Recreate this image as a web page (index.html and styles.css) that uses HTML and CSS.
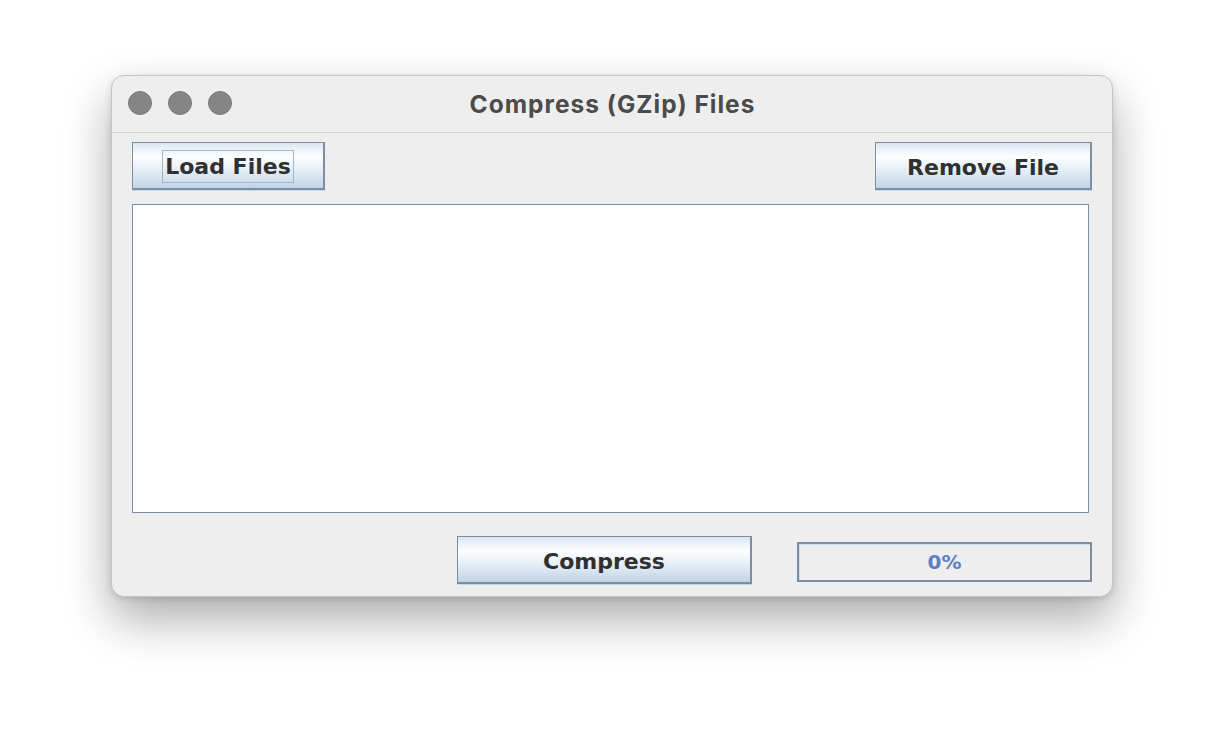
FILE: index.html
```html
<!DOCTYPE html>
<html>
<head>
<meta charset="utf-8">
<link rel="stylesheet" href="styles.css">
</head>
<body>
<div class="window">
  <div class="titlebar">
    <div class="lights">
      <span class="light"></span>
      <span class="light"></span>
      <span class="light"></span>
    </div>
    <div class="title">Compress (GZip) Files</div>
  </div>
  <div class="content">
    <div class="toprow">
      <button class="btn btn-load"><span class="focus">Load Files</span></button>
      <button class="btn btn-remove">Remove File</button>
    </div>
    <div class="list"></div>
    <div class="bottomrow">
      <button class="btn btn-compress">Compress</button>
      <div class="progress">0%</div>
    </div>
  </div>
</div>
</body>
</html>
```
FILE: styles.css
```css
html, body {
  margin: 0;
  padding: 0;
  background: #ffffff;
  width: 1224px;
  height: 744px;
  overflow: hidden;
}
body {
  padding-top: 75px;
  padding-left: 111px;
  box-sizing: border-box;
}
.window {
  width: 1002px;
  height: 522px;
  box-sizing: border-box;
  background: #eeeeee;
  border: 1px solid #c4c4c4;
  border-radius: 13px;
  box-shadow: 0 22px 48px rgba(0,0,0,0.33), 0 2px 6px rgba(0,0,0,0.12);
  overflow: hidden;
  display: flex;
  flex-direction: column;
}
.titlebar {
  height: 56px;
  border-bottom: 1px solid #d2d2d2;
  position: relative;
  display: flex;
  align-items: center;
  justify-content: center;
  flex: none;
}
.lights {
  position: absolute;
  left: 16px;
  top: 15px;
  display: flex;
  gap: 16px;
}
.light {
  width: 24px;
  height: 24px;
  border-radius: 50%;
  background: #858585;
  box-sizing: border-box;
  border: 1px solid #7a7a7a;
}
.title {
  font-family: Inter, "Liberation Sans", Arial, sans-serif;
  font-weight: 700;
  font-size: 24.5px;
  letter-spacing: 1px;
  color: #4b4b4b;
  margin-top: -1px;
  margin-left: 1px;
}
.content {
  padding: 9px 20px 0 20px;
  display: flex;
  flex-direction: column;
}
.toprow {
  display: flex;
  justify-content: space-between;
  height: 48px;
}
.btn {
  font-family: "DejaVu Sans", Verdana, sans-serif;
  font-weight: bold;
  font-size: 22px;
  color: #303030;
  height: 48px;
  padding: 4px 0 0 0;
  margin: 0;
  box-sizing: border-box;
  border: 1px solid #7d8ea3;
  border-right-width: 2px;
  border-bottom-width: 2px;
  background: linear-gradient(to bottom, #dbe6f2 0%, #fdfeff 30%, #eaf1f8 55%, #c2d4e7 100%);
  box-shadow: 0 1px 0 #c6d7ea;
  display: flex;
  align-items: center;
  justify-content: center;
}
.btn-load {
  width: 193px;
}
.focus {
  border: 1px solid #a3b6ca;
  padding: 2px 2px 2px 2px;
  line-height: 27px;
  margin-top: -2px;
}
.btn-remove {
  width: 217px;
}
.list {
  margin-top: 14px;
  width: 957px;
  height: 309px;
  background: #ffffff;
  border: 1px solid #7d8ea3;
  box-sizing: border-box;
}
.bottomrow {
  margin-top: 23px;
  display: flex;
  justify-content: flex-end;
  align-items: flex-start;
  gap: 45px;
}
.btn-compress {
  width: 295px;
  height: 48px;
  font-size: 22px;
}
.progress {
  margin-top: 6px;
  width: 295px;
  height: 40px;
  box-sizing: border-box;
  border: 2px solid #7d8ea3;
  box-shadow: inset 1px 1px 0 #c9dbf0;
  font-family: "DejaVu Sans", Verdana, sans-serif;
  font-weight: bold;
  font-size: 20px;
  color: #5c80c2;
  display: flex;
  align-items: center;
  justify-content: center;
}
```
